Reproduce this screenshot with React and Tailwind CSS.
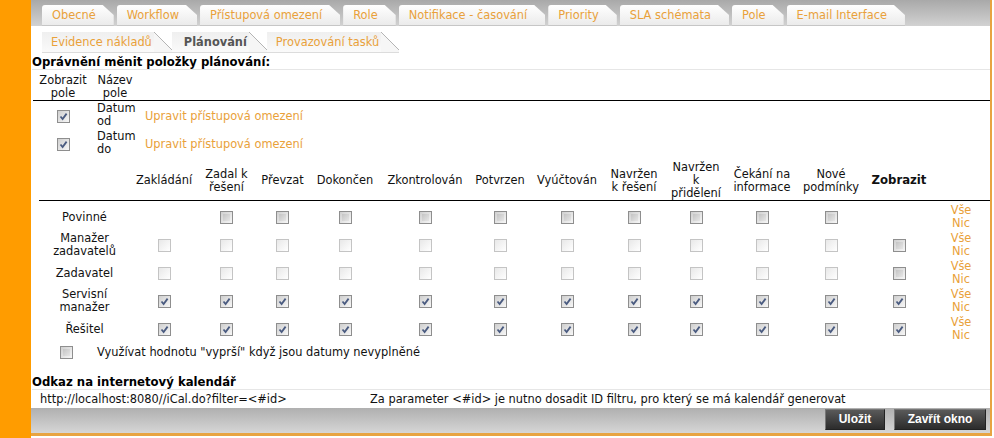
import React from "react";

const topTabs = ["Obecné", "Workflow", "Přístupová omezení", "Role", "Notifikace - časování", "Priority", "SLA schémata", "Pole", "E-mail Interface"];
const subTabs = ["Evidence nákladů", "Plánování", "Provazování tasků"];

const COLS = "grid grid-cols-[91px_68px_57px_55px_70px_90px_60px_74px_60px_64px_68px_70px_66px_58px]";

const headers = [
  "",
  "Zakládání",
  ["Zadal k", "řešení"],
  "Převzat",
  "Dokončen",
  "Zkontrolován",
  "Potvrzen",
  "Vyúčtován",
  ["Navržen", "k řešení"],
  ["Navržen", "k", "přidělení"],
  ["Čekání na", "informace"],
  ["Nové", "podmínky"],
];

const rows = [
  { label: ["Povinné"], cells: [null, ...Array(10).fill("gray"), null] },
  { label: ["Manažer", "zadavatelů"], cells: [...Array(11).fill("light"), "gray"] },
  { label: ["Zadavatel"], cells: [...Array(11).fill("light"), "gray"] },
  { label: ["Servisní", "manažer"], cells: Array(12).fill("checked") },
  { label: ["Řešitel"], cells: Array(12).fill("checked") },
];

function Lines({ parts }) {
  const list = Array.isArray(parts) ? parts : [parts];
  return list.map((p, i) => (
    <span key={i} className="block">
      {p}
    </span>
  ));
}

function Box({ v }) {
  if (!v) return null;
  if (v === "light") {
    return <span className="block h-[13px] w-[13px] border border-[#c4c4c4] bg-linear-to-br from-[#e8e8e8] to-white" />;
  }
  return (
    <span className="flex h-[13px] w-[13px] items-center justify-center border border-[#8e8e8e] bg-linear-to-br from-[#cfcfcf] to-[#f7f7f7]">
      {v === "checked" ? (
        <svg width="11" height="11" viewBox="0 0 11 11">
          <path d="M2.5 5.5 L4.6 8 L8.6 2.6" fill="none" stroke="#4a5b80" strokeWidth="1.8" />
        </svg>
      ) : (
        <span className="block h-[7px] w-[7px] bg-linear-to-br from-[#c4c4c4] to-[#e6e6e6]" />
      )}
    </span>
  );
}

function TopTab({ label }) {
  return (
    <div className="flex h-[21px] items-center rounded-tl-[3px] border-b border-[#c6c6c6] bg-linear-to-b from-white to-[#ebebeb] pl-[10px] pr-[18px] text-[#e9a13a] [clip-path:polygon(0_0,calc(100%-11px)_0,100%_10px,100%_100%,0_100%)]">
      {label}
    </div>
  );
}

function SubTab({ label, active }) {
  return (
    <div className="flex h-[21px] items-stretch">
      <div
        className={
          "flex items-center border-b border-[#dcdcdc] bg-linear-to-b from-[#efefef] to-[#fafafa] pr-[2px] " +
          (active ? "pl-[12px] font-bold text-[#555555]" : "pl-[9px] text-[#e9a13a]")
        }
      >
        {label}
      </div>
      <svg width="18" height="21" viewBox="0 0 18 21" className="block">
        <polygon points="0,0 18,18 18,21 0,21" fill="#f6f6f6" />
        <line x1="0" y1="0" x2="18" y2="18" stroke="#b4b4b4" strokeWidth="1" />
        <line x1="0" y1="20.5" x2="18" y2="20.5" stroke="#dcdcdc" strokeWidth="1" />
      </svg>
    </div>
  );
}

export default function App() {
  return (
    <div className="flex h-[438px] w-[994px] bg-white font-['DejaVu_Sans',Verdana,sans-serif] text-[11.4px] leading-[13px] text-[#111]">
      <div className="h-full w-[31px] bg-[#ff9c00]" />
      <div className="flex h-[436px] w-[961px] flex-col border-r-2 border-b-[3px] border-[#e8a442]">
        {/* main tabs */}
        <div className="flex h-[26px] items-end gap-[3px] bg-linear-to-b from-[#a9a9a9] to-[#d2d2d2] pl-[11px]">
          {topTabs.map((t) => (
            <TopTab key={t} label={t} />
          ))}
        </div>

        {/* sub tabs */}
        <div className="flex pl-[11px] pt-[6px]">
          {subTabs.map((t, i) => (
            <SubTab key={t} label={t} active={i === 1} />
          ))}
        </div>

        <h2 className="ml-[1px] border-b border-[#e6e6e6] pt-[2px] text-[11.7px] font-bold leading-[14px] text-black">Oprávnění měnit položky plánování:</h2>

        {/* fields table */}
        <div className="ml-[2px] grid grid-cols-[60px_44px_1fr]">
          <div className="flex items-center justify-center border-b border-black pt-[4px] text-center">
            <div>
              <Lines parts={["Zobrazit", "pole"]} />
            </div>
          </div>
          <div className="flex items-center justify-center border-b border-black pt-[4px] text-center">
            <div>
              <Lines parts={["Název", "pole"]} />
            </div>
          </div>
          <div className="border-b border-black" />
          {["od", "do"].map((s) => (
            <React.Fragment key={s}>
              <div className="flex h-[28px] items-center justify-center pt-[3px]">
                <Box v="checked" />
              </div>
              <div className="flex h-[28px] items-center pl-[4px]">
                <div>
                  <Lines parts={["Datum", s]} />
                </div>
              </div>
              <div className="flex h-[28px] items-center pl-[8px] pt-[3px] text-[#e9a13a]">Upravit přístupová omezení</div>
            </React.Fragment>
          ))}
        </div>

        {/* states table */}
        <div className="ml-[8px] w-[951px]">
          <div className={COLS + " h-[44px] items-center border-b border-black pt-[4px] text-center"}>
            {headers.map((h, i) => (
              <div key={i} className="whitespace-nowrap">
                <Lines parts={h} />
              </div>
            ))}
            <div className="text-[11.7px] font-bold">Zobrazit</div>
            <div />
          </div>
          <div className="pt-[2px]">
            {rows.map((r, ri) => (
              <div key={ri} className={COLS + " h-[28px] items-center text-center"}>
                <div className="whitespace-nowrap">
                  <Lines parts={r.label} />
                </div>
                {r.cells.map((c, ci) => (
                  <div key={ci} className="flex justify-center">
                    <Box v={c} />
                  </div>
                ))}
                <div className="leading-[13px] text-[#e9a13a]">
                  <span className="block">Vše</span>
                  <span className="block">Nic</span>
                </div>
              </div>
            ))}
          </div>
        </div>

        <div className="mt-[3px] flex items-center">
          <div className="flex w-[64px] justify-center pl-[6px]">
            <Box v="gray" />
          </div>
          <span className="pl-[2px]">Využívat hodnotu "vyprší" když jsou datumy nevyplněné</span>
        </div>

        <h2 className="ml-[1px] mt-[16px] border-b border-[#e6e6e6] text-[11.7px] font-bold leading-[14px] text-black">Odkaz na internetový kalendář</h2>
        <div className="flex h-[18px] items-center">
          <span className="w-[339px] pl-[9px]">http://localhost:8080//iCal.do?filter=&lt;#id&gt;</span>
          <span>Za parameter &lt;#id&gt; je nutno dosadit ID filtru, pro který se má kalendář generovat</span>
        </div>

        <div className="flex flex-1 items-start justify-end gap-[9px] bg-linear-to-b from-[#b0b0b0] to-[#d6d6d6] pr-[4px] pt-[1px]">
          <button className="h-[21px] w-[60px] border border-t-[#777] border-l-[#777] border-r-[#222] border-b-[#222] bg-linear-to-b from-[#5a5a5a] to-[#2c2c2c] font-['Liberation_Sans',Arial,sans-serif] text-[12px] font-bold text-white">
            Uložit
          </button>
          <button className="h-[21px] w-[92px] border border-t-[#777] border-l-[#777] border-r-[#222] border-b-[#222] bg-linear-to-b from-[#5a5a5a] to-[#2c2c2c] font-['Liberation_Sans',Arial,sans-serif] text-[12px] font-bold text-white">
            Zavřít okno
          </button>
        </div>
      </div>
    </div>
  );
}
